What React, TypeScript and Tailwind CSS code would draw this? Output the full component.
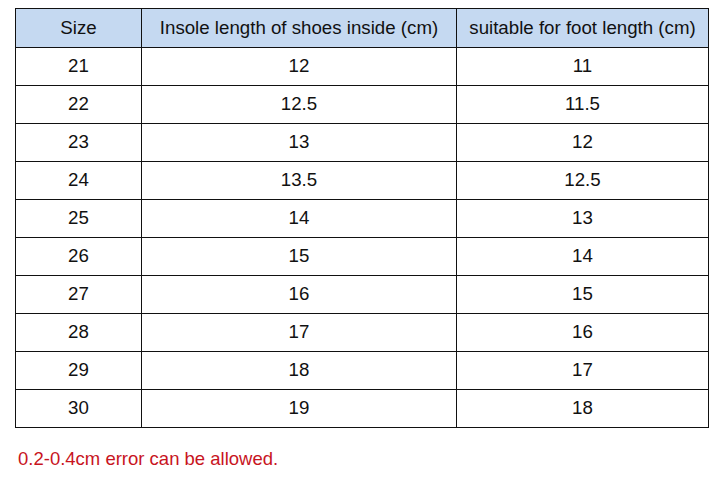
const rows: [string, string, string][] = [
  ['21', '12', '11'],
  ['22', '12.5', '11.5'],
  ['23', '13', '12'],
  ['24', '13.5', '12.5'],
  ['25', '14', '13'],
  ['26', '15', '14'],
  ['27', '16', '15'],
  ['28', '17', '16'],
  ['29', '18', '17'],
  ['30', '19', '18'],
];

export default function App() {
  return (
    <div
      className="w-[724px] h-[490px] bg-white pt-[8px] pl-[15px] text-[#111]"
      style={{ fontFamily: '"Liberation Sans", Arial, sans-serif' }}
    >
      <table className="border-collapse text-[18.7px] leading-none">
        <thead>
          <tr className="bg-[#c5d9f1] h-[39px]">
            <th className="w-[126px] border border-[#111] font-normal text-center">Size</th>
            <th className="w-[315px] border border-[#111] font-normal text-center">Insole length of shoes inside (cm)</th>
            <th className="w-[252px] border border-[#111] font-normal text-center">suitable for foot length (cm)</th>
          </tr>
        </thead>
        <tbody>
          {rows.map(([size, insole, foot]) => (
            <tr key={size} className="h-[38px]">
              <td className="border border-[#111] text-center">{size}</td>
              <td className="border border-[#111] text-center">{insole}</td>
              <td className="border border-[#111] text-center">{foot}</td>
            </tr>
          ))}
        </tbody>
      </table>
      <p className="mt-[22px] ml-[3px] text-[18.5px] leading-none text-[#c8141e]">0.2-0.4cm error can be allowed.</p>
    </div>
  );
}
